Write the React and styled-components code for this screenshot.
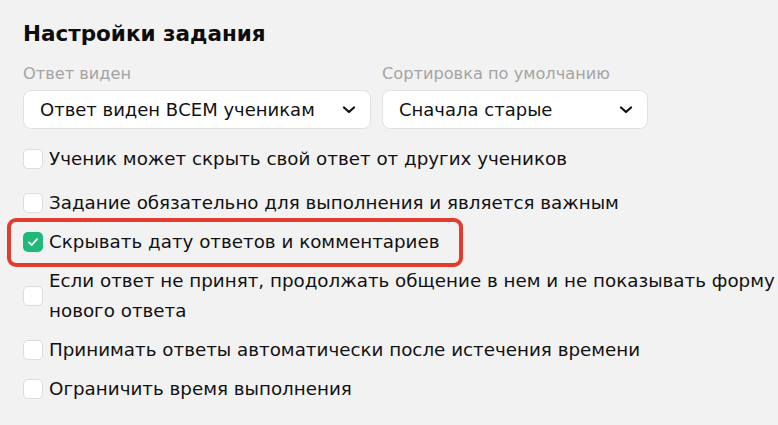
import React from 'react'
import styled, { createGlobalStyle, css } from 'styled-components'

const GlobalStyle = createGlobalStyle`
    html, body {
        margin: 0;
        background: #f2f2f2;
        overflow: hidden;
    }

    body {
        font-family: 'DejaVu Sans', 'Liberation Sans', sans-serif;
        color: #111;
    }
`

const Panel = styled.section`
    padding: 20px 0 0 23px;
`

const Title = styled.h2`
    margin: 0;
    font-size: 21.5px;
    line-height: 28px;
    font-weight: 700;
    color: #0d0d0d;
`

const Fields = styled.div`
    display: flex;
    gap: 11px;
    margin-top: 16px;
`

const Field = styled.label`
    display: flex;
    flex-direction: column;
    gap: 6px;
    width: ${({ width }) => width}px;
`

const FieldLabel = styled.span`
    font-size: 16.2px;
    line-height: 20px;
    color: #a4a4a4;
    white-space: nowrap;
`

const Select = styled.div`
    box-sizing: border-box;
    height: 39px;
    display: flex;
    align-items: center;
    justify-content: space-between;
    padding: 0 14px 0 16px;
    background: #fff;
    border: 1px solid #e1e1e1;
    border-radius: 8px;
    font-size: 18px;
    white-space: nowrap;
`

const Options = styled.div`
    display: flex;
    flex-direction: column;
    align-items: flex-start;
    gap: 9px;
    margin-top: 15px;
`

const Option = styled.div`
    position: relative;
    display: flex;
    align-items: center;
    gap: 6px;
    font-size: 18.3px;
    line-height: 30px;
    white-space: nowrap;
    margin-bottom: ${({ spaced }) => (spaced ? '5px' : '0')};

    ${({ highlighted }) =>
        highlighted &&
        css`
            &::before {
                content: '';
                position: absolute;
                left: -16px;
                right: -23px;
                top: -9px;
                bottom: -10px;
                border: 4px solid #e53b2f;
                border-radius: 9px;
            }
        `}
`

const Box = styled.span`
    box-sizing: border-box;
    flex: none;
    width: 20px;
    height: 20px;
    display: flex;
    align-items: center;
    justify-content: center;
    border-radius: 5px;
    background: ${({ checked }) => (checked ? '#1fb97a' : '#fff')};
    border: ${({ checked }) => (checked ? 'none' : '1px solid #dcdcdc')};
`

const Chevron = () => (
    <svg width="14" height="8" viewBox="0 0 14 8" fill="none">
        <path d="M2 1.5L7 6L12 1.5" stroke="#111" strokeWidth="2.2" strokeLinecap="round" strokeLinejoin="round" />
    </svg>
)

const Check = () => (
    <svg width="14" height="14" viewBox="0 0 14 14" fill="none">
        <path d="M3 7.4L5.8 10L11 4.2" stroke="#fff" strokeWidth="1.8" strokeLinecap="round" strokeLinejoin="round" />
    </svg>
)

const options = [
    { text: 'Ученик может скрыть свой ответ от других учеников', spaced: true },
    { text: 'Задание обязательно для выполнения и является важным' },
    { text: 'Скрывать дату ответов и комментариев', checked: true, highlighted: true },
    {
        text: [
            'Если ответ не принят, продолжать общение в нем и не показывать форму',
            'нового ответа',
        ],
    },
    { text: 'Принимать ответы автоматически после истечения времени' },
    { text: 'Ограничить время выполнения' },
]

const App = () => {
    return (
        <Panel>
            <GlobalStyle />
            <Title>Настройки задания</Title>

            <Fields>
                <Field width={348}>
                    <FieldLabel>Ответ виден</FieldLabel>
                    <Select>
                        Ответ виден ВСЕМ ученикам
                        <Chevron />
                    </Select>
                </Field>
                <Field width={266}>
                    <FieldLabel>Сортировка по умолчанию</FieldLabel>
                    <Select>
                        Сначала старые
                        <Chevron />
                    </Select>
                </Field>
            </Fields>

            <Options>
                {options.map((o, i) => (
                    <Option key={i} spaced={o.spaced} highlighted={o.highlighted}>
                        <Box checked={o.checked}>{o.checked && <Check />}</Box>
                        <span>
                            {Array.isArray(o.text)
                                ? o.text.map((line, j) => (
                                      <React.Fragment key={j}>
                                          {j > 0 && <br />}
                                          {line}
                                      </React.Fragment>
                                  ))
                                : o.text}
                        </span>
                    </Option>
                ))}
            </Options>
        </Panel>
    )
}

export default App
